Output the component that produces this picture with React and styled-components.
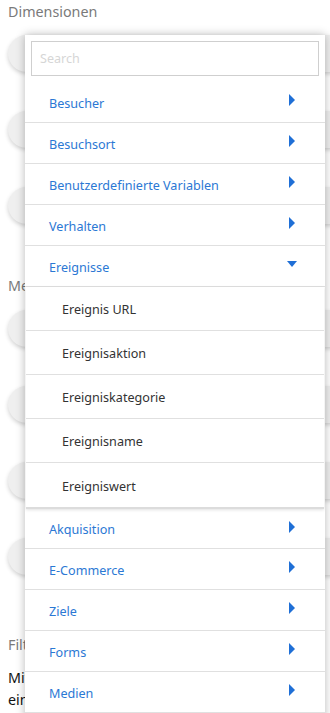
import React from 'react';
import styled, { createGlobalStyle } from 'styled-components';

const GlobalStyle = createGlobalStyle`
  html, body {
    margin: 0;
    padding: 0;
    background: #fff;
    font-family: 'Segoe UI', 'Noto Sans', 'Open Sans', sans-serif;
    overflow: hidden;
  }
`;

const Page = styled.div`
  position: relative;
  height: 713px;
  padding: 2px 8px 0;
  box-sizing: border-box;
  overflow: hidden;
`;

const Label = styled.div`
  font-size: 14.3px;
  line-height: 20px;
  color: #7a7a7a;
  margin-top: ${(p) => p.$top || 0}px;
`;

const PillList = styled.div`
  display: flex;
  flex-direction: column;
  gap: 39px;
  margin-top: ${(p) => p.$top}px;
`;

const Pill = styled.div`
  height: 37px;
  width: 340px;
  border-radius: 19px;
  background: #efefef;
  box-shadow: 0 2px 4px rgba(0, 0, 0, 0.18);
`;

const Paragraph = styled.p`
  margin: 12px 0 0;
  font-size: 14.3px;
  line-height: 22px;
  color: #111;
  width: 314px;
`;

const Dropdown = styled.div`
  position: absolute;
  top: 35px;
  left: 25px;
  width: 300px;
  height: 700px;
  background: #fff;
  box-shadow: 0 0 9px rgba(0, 0, 0, 0.28);
  overflow: hidden;
`;

const SearchWrap = styled.div`
  padding: 6px;
`;

const SearchInput = styled.input`
  display: block;
  width: 100%;
  height: 35px;
  box-sizing: border-box;
  border: 1px solid #cfcfcf;
  padding: 0 8px;
  font-family: inherit;
  font-size: 12.6px;
  outline: none;
  &::placeholder {
    color: #d6d6d6;
  }
`;

const Item = styled.div`
  display: flex;
  align-items: center;
  justify-content: space-between;
  height: ${(p) => p.$h || 41}px;
  box-sizing: border-box;
  padding: 2px 30px 0 24px;
  border-bottom: 1px solid #e0e0e0;
  color: #2b78d4;
  font-size: 12.6px;
`;

const Arrow = styled.span`
  width: 0;
  height: 0;
  margin-top: -6px;
  ${(p) =>
    p.$open
      ? `border-left: 5px solid transparent;
         border-right: 5px solid transparent;
         border-top: 6px solid #1f6fd6;
         margin-right: -2px;`
      : `border-top: 6px solid transparent;
         border-bottom: 6px solid transparent;
         border-left: 6px solid #1f6fd6;`}
`;

const SubList = styled.div`
  margin: 0 1px;
  border-bottom: 2px solid #dcdcdc;
  box-shadow: 0 1px 3px rgba(0, 0, 0, 0.12);
`;

const SubItem = styled.div`
  display: flex;
  align-items: center;
  height: 44px;
  box-sizing: border-box;
  padding: 2px 0 0 36px;
  border-bottom: 1px solid #e0e0e0;
  color: #333;
  font-size: 12.6px;
  &:last-child {
    border-bottom: none;
  }
`;

const topItems = ['Besucher', 'Besuchsort', 'Benutzerdefinierte Variablen', 'Verhalten'];
const subItems = ['Ereignis URL', 'Ereignisaktion', 'Ereigniskategorie', 'Ereignisname', 'Ereigniswert'];
const bottomItems = ['Akquisition', 'E-Commerce', 'Ziele', 'Forms', 'Medien'];

export default function App() {
  return (
    <>
      <GlobalStyle />
      <Page>
        <Label>Dimensionen</Label>
        <PillList $top={13}>
          <Pill />
          <Pill />
          <Pill />
        </PillList>
        <Label $top={52}>Metriken</Label>
        <PillList $top={14}>
          <Pill />
          <Pill />
          <Pill />
          <Pill />
        </PillList>
        <Label $top={60}>Filter</Label>
        <Paragraph>
          Mit Filtern können Sie die Daten eines Berichts eingrenzen, so dass nur
          die gewünschten Besuche angezeigt werden.
        </Paragraph>

        <Dropdown>
          <SearchWrap>
            <SearchInput placeholder="Search" />
          </SearchWrap>
          {topItems.map((t) => (
            <Item key={t}>
              {t}
              <Arrow />
            </Item>
          ))}
          <Item>
            Ereignisse
            <Arrow $open />
          </Item>
          <SubList>
            {subItems.map((t) => (
              <SubItem key={t}>{t}</SubItem>
            ))}
          </SubList>
          {bottomItems.map((t) => (
            <Item key={t} $h={t === 'Akquisition' ? 40 : 41}>
              {t}
              <Arrow />
            </Item>
          ))}
        </Dropdown>
      </Page>
    </>
  );
}
